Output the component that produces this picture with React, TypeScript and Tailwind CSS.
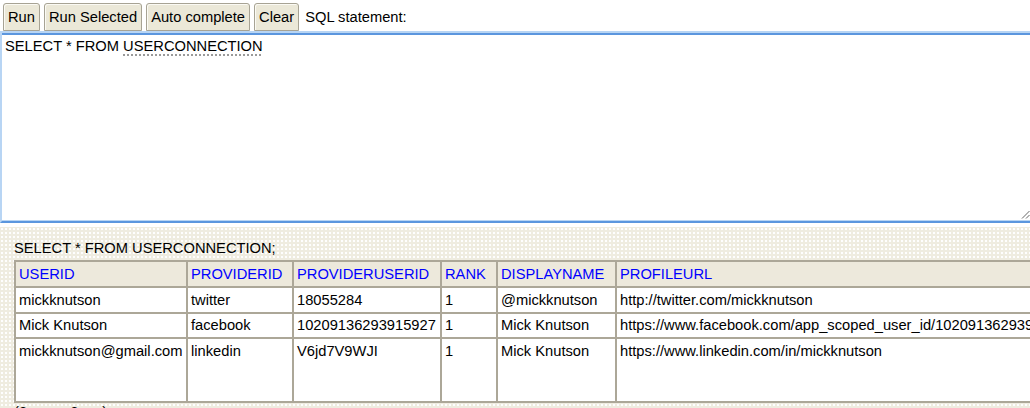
import React from "react";

const cols = [
  { name: "USERID", w: 172 },
  { name: "PROVIDERID", w: 106 },
  { name: "PROVIDERUSERID", w: 148 },
  { name: "RANK", w: 56 },
  { name: "DISPLAYNAME", w: 119 },
  { name: "PROFILEURL", w: 560 },
];

const rows = [
  ["mickknutson", "twitter", "18055284", "1", "@mickknutson", "http://twitter.com/mickknutson"],
  ["Mick Knutson", "facebook", "10209136293915927", "1", "Mick Knutson", "https://www.facebook.com/app_scoped_user_id/10209136293915927/"],
  ["mickknutson@gmail.com", "linkedin", "V6jd7V9WJI", "1", "Mick Knutson", "https://www.linkedin.com/in/mickknutson"],
];

function Btn({ label }: { label: string }) {
  return (
    <button className="h-[28px] px-[4px] rounded-t-[3px] border border-[#a7a394] bg-[#ebe8d8] shadow-[inset_1px_1px_0_#fbfaf4] text-[14.7px] leading-[16px] text-black">
      {label}
    </button>
  );
}

export default function App() {
  return (
    <div
      className="w-[1030px] h-[408px] overflow-hidden bg-white text-black"
      style={{ fontFamily: '"Liberation Sans", Arial, sans-serif' }}
    >
      <div className="flex items-center gap-[4px] pl-[3px] pt-[3px] h-[31px]">
        <Btn label="Run" />
        <Btn label="Run Selected" />
        <Btn label="Auto complete" />
        <Btn label="Clear" />
        <span className="ml-[2px] text-[14.7px] leading-[16px]">SQL statement:</span>
      </div>
      <div className="relative h-[192px] w-[1032px] border-t-[2px] border-t-[#b8d5f4] border-b-[2px] border-b-[#5b96de] border-l-[2px] border-l-[#b8d5f4]">
        <div className="h-full border-t-[2px] border-t-[#5b96de] border-b-[1px] border-b-[#b8d5f4] px-[3px] pt-[3px] text-[14.7px] leading-[17px]">
          SELECT * FROM{" "}
          <span className="underline decoration-dotted decoration-[#9a9a9a] decoration-[1.5px] underline-offset-[3px]">
            USERCONNECTION
          </span>
        </div>
        <svg className="absolute right-[2px] bottom-[2px]" width="9" height="9" viewBox="0 0 9 9">
          <line x1="1" y1="8.5" x2="8.5" y2="1" stroke="#666" strokeWidth="1" />
          <line x1="5" y1="8.5" x2="8.5" y2="5" stroke="#666" strokeWidth="1" />
        </svg>
      </div>
      <div className="mt-[4px] h-[200px] bg-[#efece0] bg-[radial-gradient(circle,#ffffff_0.7px,transparent_0.9px)] bg-[size:4px_4px] pl-[14px] pt-[13px]">
        <div className="text-[14.7px] leading-[16px] mb-[4px]">SELECT * FROM USERCONNECTION;</div>
        <table className="table-fixed border-collapse text-[14.7px] leading-[17px]" style={{ width: 1161 }}>
          <colgroup>
            {cols.map((c) => (
              <col key={c.name} style={{ width: c.w }} />
            ))}
          </colgroup>
          <thead>
            <tr className="bg-[#ede9dc]">
              {cols.map((c) => (
                <th
                  key={c.name}
                  className="border-[2px] border-[#aca798] px-[3px] h-[26px] py-0 text-left font-normal text-[#0000ff] align-middle whitespace-nowrap"
                >
                  {c.name}
                </th>
              ))}
            </tr>
          </thead>
          <tbody className="bg-white">
            {rows.map((r, i) => (
              <tr key={i}>
                {r.map((v, j) => (
                  <td
                    key={j}
                    className={`border-[2px] border-[#aca798] px-[3px] whitespace-nowrap overflow-hidden ${
                      i === 2 ? "h-[64px] align-top pt-[4px]" : i === 1 ? "h-[25px] align-middle py-0" : "h-[26px] align-middle py-0"
                    }`}
                  >
                    {v}
                  </td>
                ))}
              </tr>
            ))}
          </tbody>
        </table>
        <div className="text-[14.7px] leading-[16px] mt-[1px]">(3 rows, 2 ms)</div>
      </div>
    </div>
  );
}
